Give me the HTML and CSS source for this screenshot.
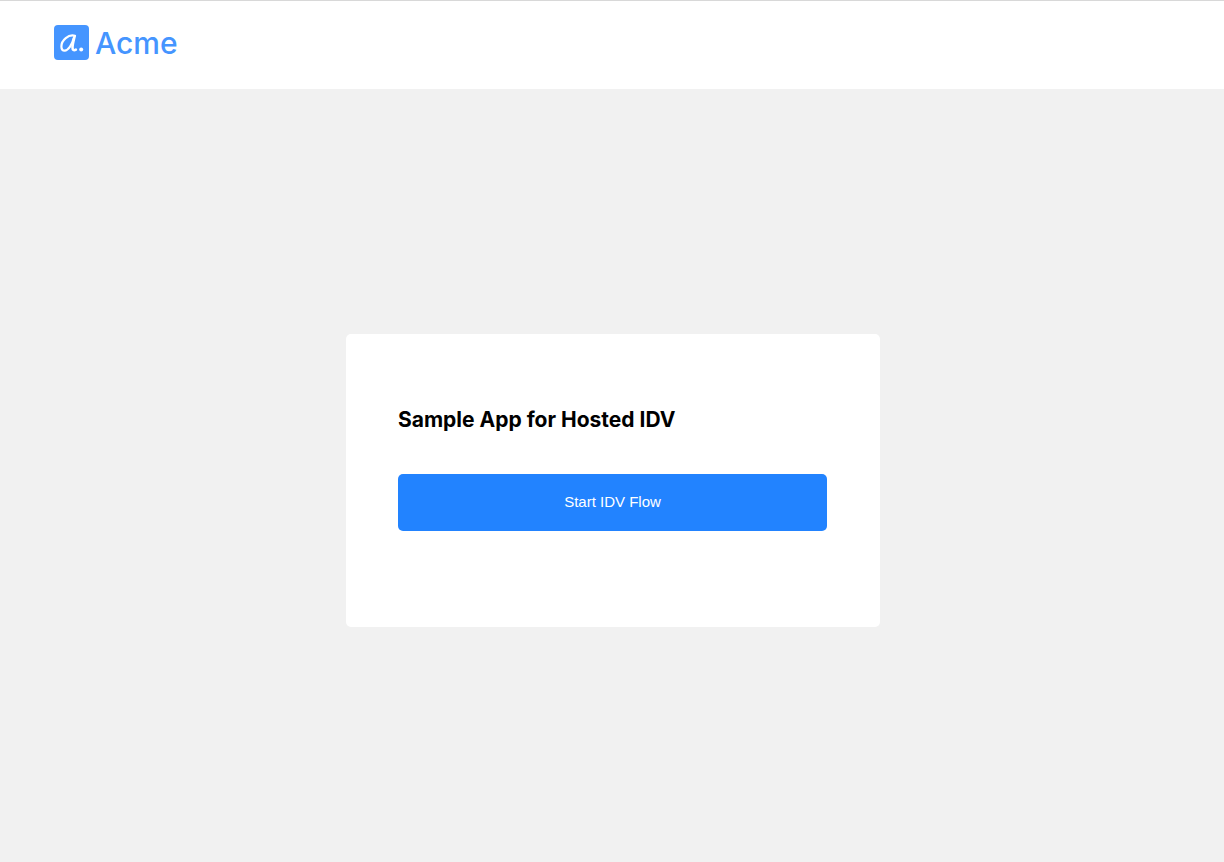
FILE: index.html
```html
<!DOCTYPE html>
<html lang="en">
<head>
  <meta charset="utf-8">
  <meta name="viewport" content="width=device-width, initial-scale=1">
  <title>Acme</title>
  <link rel="stylesheet" href="styles.css">
</head>
<body>
  <header class="header">
    <div class="brand">
      <svg class="brand-mark" viewBox="0 0 35 35" aria-hidden="true">
        <rect width="35" height="35" rx="4" fill="#4595ff"/>
        <g fill="none" stroke="#fff" stroke-linecap="round" stroke-linejoin="round">
          <path stroke-width="2.2" d="M21 10.800C14.500 8.800 7.400 15.500 7.400 21.400c0 2.700 1.200 4.200 3.300 4.200 3.500 0 7.300-5.600 9.100-12.600"/>
          <path stroke-width="2.600" d="M20.600 11.400c-1 4.100-2.100 8-2.100 11 0 2.500 1.300 3.500 3.400 2.200"/>
        </g>
        <circle cx="27.200" cy="24.600" r="2" fill="#fff"/>
      </svg>
      <span class="brand-name">Acme</span>
    </div>
  </header>
  <main class="main">
    <section class="card">
      <h1 class="title">Sample App for Hosted IDV</h1>
      <button class="start" type="button">Start IDV Flow</button>
    </section>
  </main>
</body>
</html>
```
FILE: styles.css
```css
* {
  box-sizing: border-box;
}

body {
  display: flex;
  flex-direction: column;
  min-height: 100vh;
  margin: 0;
  background: #f1f1f1;
  color: #000;
  font-family: Inter, sans-serif;
}

.header {
  padding: 24px 54px 28px;
  border-top: 1px solid #d8d8d8;
  background: #fff;
}

.brand {
  display: flex;
  align-items: flex-start;
  gap: 6px;
  height: 36px;
}

.brand-mark {
  width: 35px;
  height: 35px;
}

.brand-name {
  color: #4595ff;
  font-size: 30px;
  font-weight: 500;
  line-height: 36px;
}

.main {
  display: flex;
  flex: 1;
  align-items: center;
  justify-content: center;
  padding: 26px 16px 16px 18px;
}

.card {
  width: 100%;
  max-width: 534px;
  padding: 72px 53px 96px 52px;
  border-radius: 5px;
  background: #fff;
}

.title {
  margin: 0 0 40px;
  font-size: 21px;
  font-weight: 700;
  line-height: 28px;
}

.start {
  display: block;
  width: 100%;
  padding: 17px 18px 19px;
  border: 0;
  border-radius: 5px;
  background: #2283ff;
  color: #fff;
  font-family: "Liberation Sans", Arial, sans-serif;
  font-size: 15px;
  line-height: 21px;
  cursor: pointer;
}
```
